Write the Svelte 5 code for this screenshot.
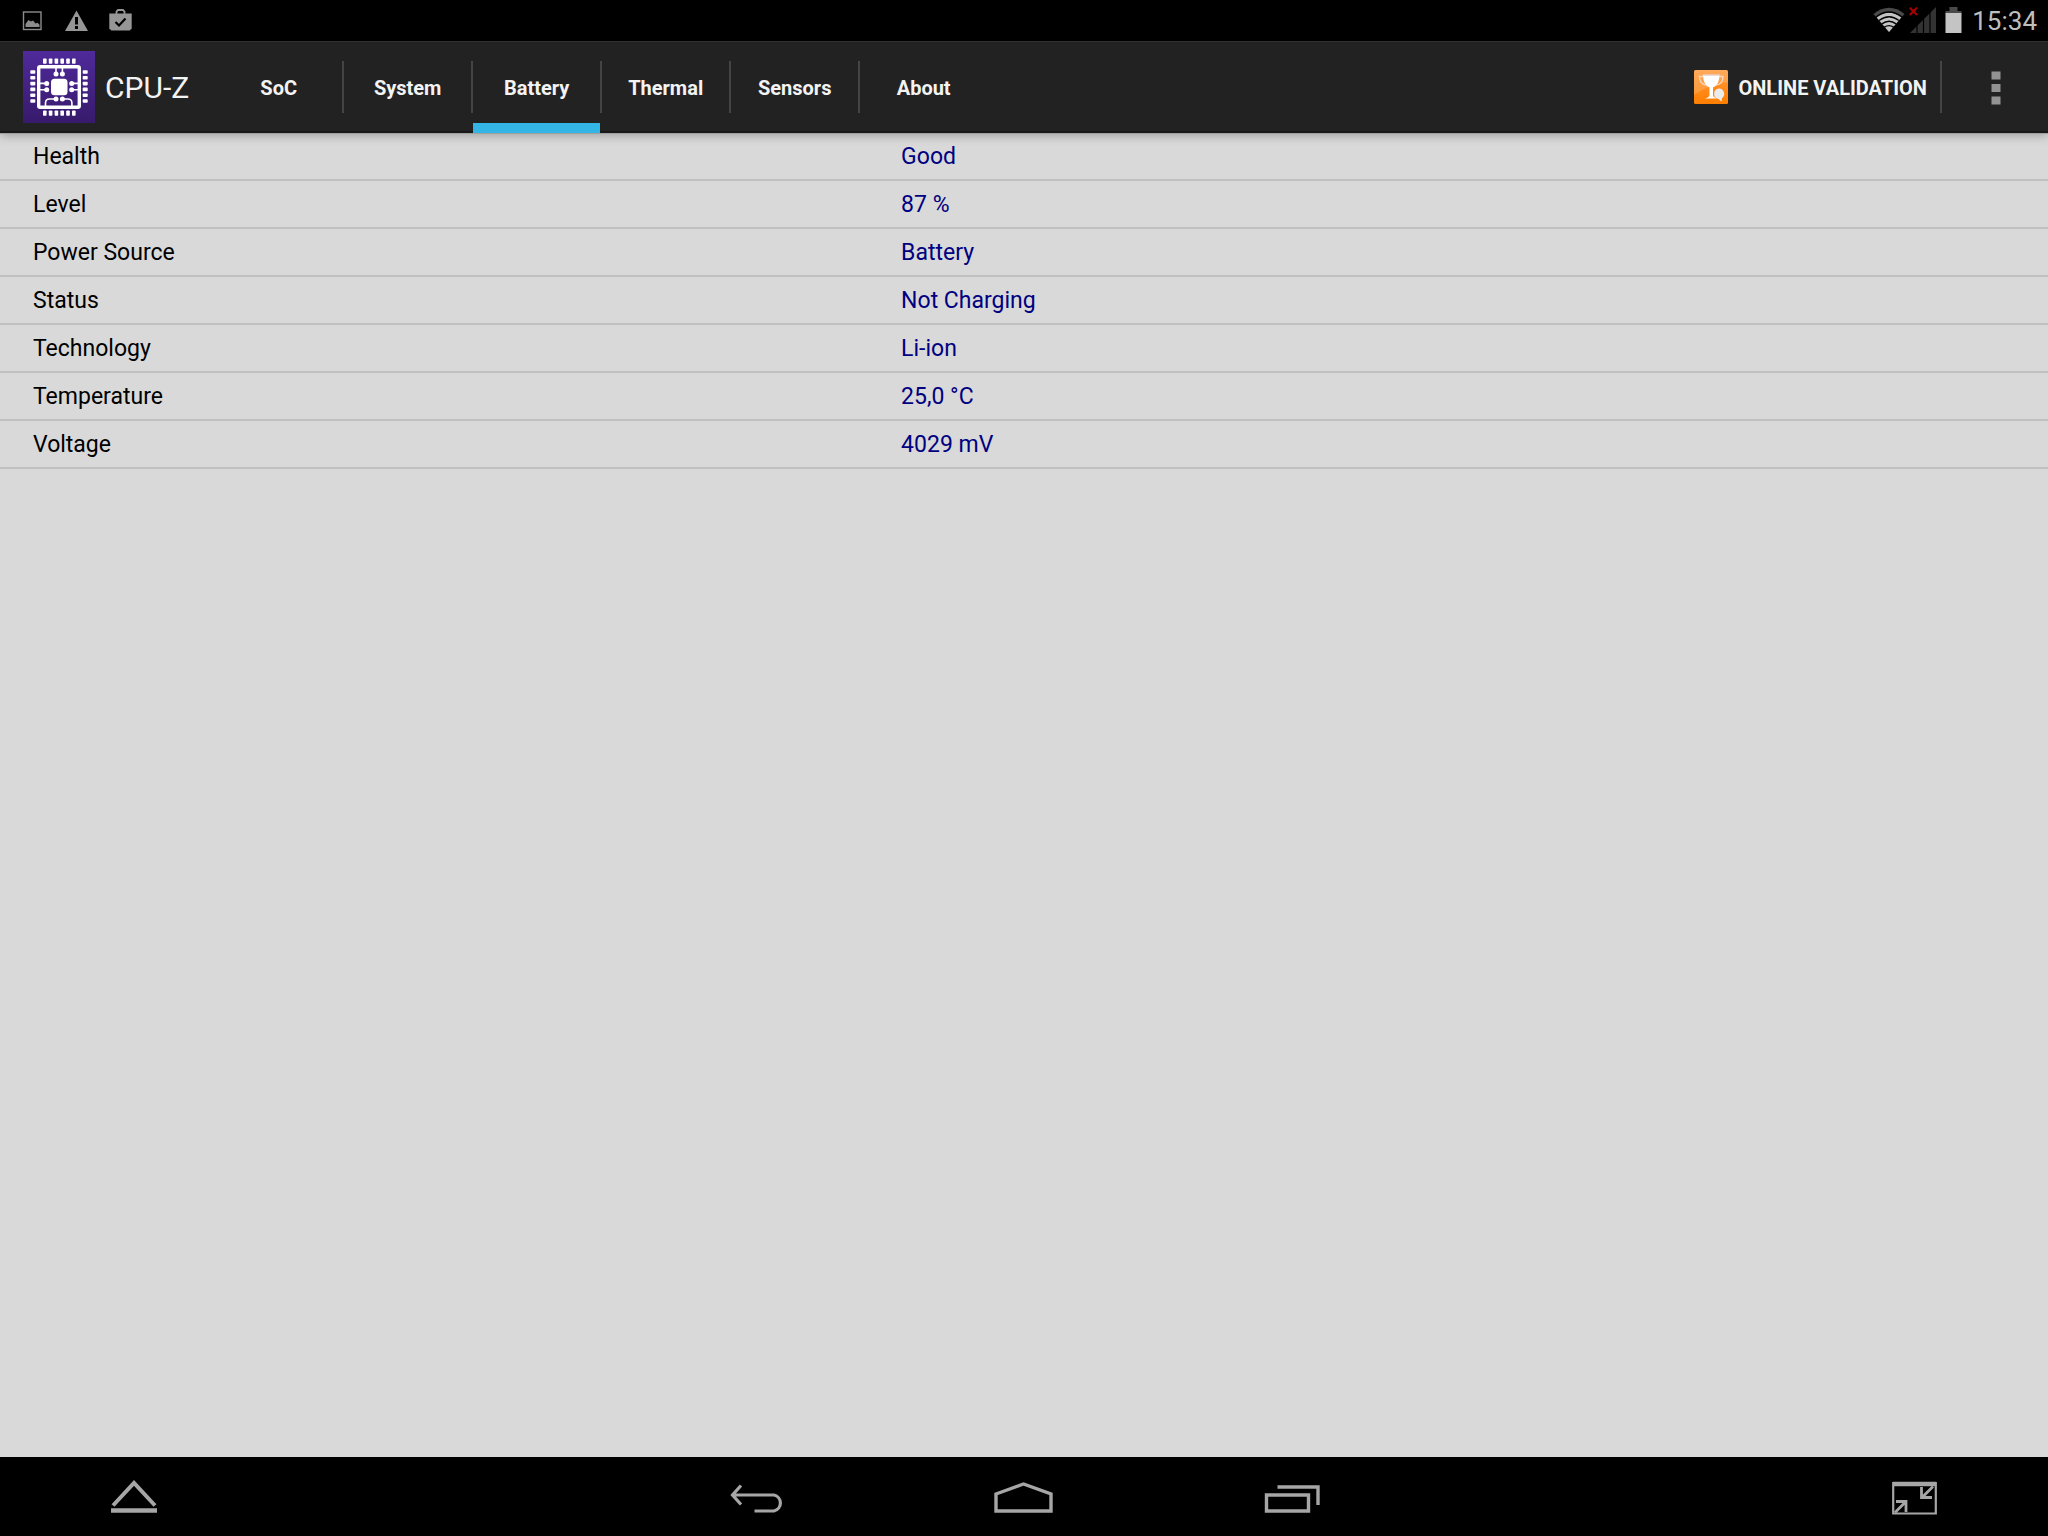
<script lang="ts">
    const TABS = ['SoC', 'System', 'Battery', 'Thermal', 'Sensors', 'About'];
    const PINS = [0, 1, 2, 3, 4, 5].map(i => 20 + i * 5.8);

    const BATTERY = [
        { label: 'Health',       value: 'Good' },
        { label: 'Level',        value: '87 %' },
        { label: 'Power Source', value: 'Battery' },
        { label: 'Status',       value: 'Not Charging' },
        { label: 'Technology',   value: 'Li-ion' },
        { label: 'Temperature',  value: '25,0 °C' },
        { label: 'Voltage',      value: '4029 mV' }
    ];

    let activeTab = $state('Battery');
    let rows = $derived(activeTab === 'Battery' ? BATTERY : []);
</script>

<div class="screen">

    <div class="status-bar">
        <div class="notifications">
            <svg width="24" height="24" viewBox="0 0 24 24" aria-hidden="true">
                <rect x="3.500" y="3" width="17.500" height="17.500" fill="none" stroke="#8c8c8c" stroke-width="1.400" />
                <path d="M5.500 18v-3l3-4 2.500 1.500 2-1 2.500 3 2-.8 2 2V18z" fill="#8c8c8c" />
            </svg>
            <svg width="24" height="24" viewBox="0 0 24 24" aria-hidden="true">
                <path d="M12.500 1.500 24 22H1z" fill="#969696" />
                <path d="M11 8h3v7.500h-3zM11 17h3v3h-3z" fill="#000" />
            </svg>
            <svg width="24" height="24" viewBox="0 0 24 24" aria-hidden="true">
                <path d="M8.500 5V2.500L10 1h5l1.500 1.500V5" fill="none" stroke="#969696" stroke-width="1.800" />
                <path d="M1.300 4.500h22.400v15l-2 2H3.300l-2-2z" fill="#969696" />
                <path d="m7.500 13 3.500 3.500 6.500-7" fill="none" stroke="#000" stroke-width="2.200" />
            </svg>
        </div>
        <div class="indicators">
            <svg width="32" height="28" viewBox="0 0 32 28" aria-hidden="true">
                <path d="M.5 7Q16-5.500 31.500 7L16 25z" fill="#4a4a4a" />
                <path d="M3.800 10.500Q16 1 28.200 10.500L16 25z" fill="#c4c4c4" />
                <g fill="none" stroke="#000" stroke-width="1.400">
                    <path d="M2.800 10Q16 0 29.200 10" />
                    <path d="M6 13.500q10-7.600 20 0" />
                    <path d="M8.800 16.900q7.200-5.400 14.400 0" />
                    <path d="M11.400 20.100q4.600-3 9.200 0" />
                </g>
            </svg>
            <svg class="signal" width="28" height="28" viewBox="0 0 28 28" aria-hidden="true">
                <path d="M1 26 27 0v26z" fill="#333" />
                <path d="M8 0v28M14.500 0v28M21 0v28" stroke="#000" stroke-width="1.200" />
                <path d="m.8.800 7.200 7.200m0-7.200L.8 8" stroke="#a80000" stroke-width="2" />
            </svg>
            <svg class="battery" width="18" height="28" viewBox="0 0 18 28" aria-hidden="true">
                <path d="M5.500 0h8v4h4v3h-16V4h4z" fill="#4a4a4a" />
                <path d="M1.500 6h16v20h-16z" fill="#c4c4c4" />
            </svg>
            <time class="clock">15:34</time>
        </div>
    </div>

    <header class="action-bar">
        <svg class="logo" width="72" height="72" viewBox="0 0 72 72" aria-hidden="true">
            <defs>
                <linearGradient id="logo-bg" x1="0" y1="0" x2="0" y2="1">
                    <stop offset="0" stop-color="#4f2a9b" />
                    <stop offset="1" stop-color="#371a6b" />
                </linearGradient>
            </defs>
            <rect width="72" height="72" fill="url(#logo-bg)" />
            <g fill="#fff">
                {#each PINS as p}
                    <rect x={p} y="7.500" width="3.600" height="5.200" rx=".8" />
                    <rect x={p} y="59.500" width="3.600" height="5.200" rx=".8" />
                    <rect x="7.300" y={p - 0.8} width="5" height="3.600" rx=".8" />
                    <rect x="59.700" y={p - 0.8} width="5" height="3.600" rx=".8" />
                {/each}
                <rect x="28" y="27.800" width="16.500" height="16.500" rx="3.500" />
                <circle cx="33" cy="23" r="2.500" />
                <circle cx="39.400" cy="23" r="2.500" />
                <circle cx="23.700" cy="32.400" r="2.500" />
                <circle cx="23.700" cy="38.800" r="2.500" />
                <circle cx="48.700" cy="32.400" r="2.500" />
                <circle cx="48.700" cy="38.800" r="2.500" />
                <circle cx="33" cy="48" r="2.500" />
                <circle cx="39.400" cy="48" r="2.500" />
            </g>
            <g fill="none" stroke="#fff">
                <rect x="15.700" y="15.700" width="40.600" height="40.600" rx="1.500" stroke-width="3.400" />
                <path d="M33 23v-7M39.400 23v-7M23.700 32.400H16M23.700 38.800H16M48.700 32.400H56M48.700 38.800H56M33 48h-6.500q-4 0-4 4v4M39.400 48h5.500q4 0 4 4v4" stroke-width="1.600" />
            </g>
        </svg>
        <h1 class="title">CPU-Z</h1>

        <div class="tabs" role="tablist">
            {#each TABS as tab}
                <button
                    class="tab"
                    class:active={activeTab === tab}
                    role="tab"
                    aria-selected={activeTab === tab}
                    onclick={() => activeTab = tab}
                >{tab}</button>
            {/each}
        </div>

        <button class="validate">
            <svg width="34" height="34" viewBox="0 0 34 34" aria-hidden="true">
                <defs>
                    <linearGradient id="cup-bg" x1="0" y1="0" x2="0" y2="1">
                        <stop offset="0" stop-color="#ff9a3c" />
                        <stop offset="1" stop-color="#ff7e00" />
                    </linearGradient>
                </defs>
                <rect width="34" height="34" rx="1.500" fill="url(#cup-bg)" />
                <path d="M0 1.500Q0 0 1.500 0h31Q34 0 34 1.500V12Q14 15 0 25z" fill="#fff" opacity=".16" />
                <path d="M9.500 6.500h-4q0 8 7 8.500M25 6.500h4q0 8-7 8.500" fill="none" stroke="#f6d9c0" stroke-width="1.300" />
                <path d="M9 4.500h16.500q0 10-6.500 13v7.500q0 2 4 3.500H11q4.500-1.500 4.500-3.500v-7.500Q9 14.500 9 4.500z" fill="#fff" />
                <path d="M9.500 5h15.500" stroke="#d8b9a4" />
                <path d="M25 18.500a5.400 5.400 0 0 1 3 9.700l-.5 3.300-3-2.500a5.300 5.300 0 0 1 .5-10.500z" fill="#ececec" />
            </svg>
            <span>ONLINE VALIDATION</span>
        </button>
        <button class="overflow" aria-label="More options">
            <svg width="10" height="34" viewBox="0 0 10 34" aria-hidden="true">
                <path d="M.5.500h9v8h-9zM.5 13h9v8h-9zM.5 25.500h9v8h-9z" fill="#939393" />
            </svg>
        </button>
    </header>

    <main class="content">
        <table>
            <tbody>
                {#each rows as row}
                    <tr>
                        <th scope="row">{row.label}</th>
                        <td>{row.value}</td>
                    </tr>
                {/each}
            </tbody>
        </table>
    </main>

    <nav class="nav-bar">
        <button aria-label="Show panel">
            <svg width="64" height="39" viewBox="0 0 64 39" aria-hidden="true">
                <path d="M11 28.500 32 6l21 22.500" stroke-width="4" />
                <path d="M9 33.500h46" stroke-width="4.500" />
            </svg>
        </button>
        <div class="nav-keys">
            <button aria-label="Back">
                <svg width="64" height="39" viewBox="0 0 64 39" aria-hidden="true">
                    <path d="M17 8.500 8.500 18l8.500 9.500M8.500 18h41.500a8.200 8.200 0 0 1 0 16H30.500" stroke-width="3.200" />
                </svg>
            </button>
            <button aria-label="Home">
                <svg width="64" height="39" viewBox="0 0 64 39" aria-hidden="true">
                    <path d="M4 17 31.500 7 59 17v17H4z" stroke-width="3.400" />
                </svg>
            </button>
            <button aria-label="Recent apps">
                <svg width="64" height="39" viewBox="0 0 64 39" aria-hidden="true">
                    <path d="M6.500 18h42v16h-42zM17.500 10h40.500v18" stroke-width="3.400" />
                </svg>
            </button>
        </div>
        <button aria-label="Shrink window">
            <svg width="64" height="39" viewBox="0 0 64 39" aria-hidden="true">
                <path d="M11.200 6h42.600v30.500H11.200z" stroke-width="2.200" />
                <path d="M11 7h43" stroke-width="4.500" />
                <path d="M13 35.500 24 24.500M14 24.500h10v10.500M51 9.500 40 20.500M50 20.500H39.500V10" stroke-width="2.800" />
            </svg>
        </button>
    </nav>

</div>

<style>
:global(body) {
    background: #d9d9d9;
}

.screen {
    min-height: 100vh;
    display: flex;
    flex-direction: column;
    font-family: Roboto, sans-serif;
}

button {
    background: none;
    border: none;
    padding: 0;
    font-family: inherit;
    cursor: pointer;
}

svg {
    display: block;
    flex: none;
}

/* ── Status bar ── */
.status-bar {
    height: 41px;
    display: flex;
    align-items: center;
    justify-content: space-between;
    padding: 0 11px 0 20px;
    background: #000;
}

.notifications {
    display: flex;
    gap: 20px;
}

.indicators {
    display: flex;
    align-items: center;
}

.signal {
    margin-left: 4px;
}

.battery {
    margin: 0 10px 0 7px;
}

.clock {
    font-size: 26px;
    line-height: 40px;
    color: #bebebe;
}

/* ── Action bar ── */
.action-bar {
    position: relative;
    z-index: 1;
    height: 92px;
    box-sizing: border-box;
    display: flex;
    align-items: center;
    padding-left: 23px;
    border-top: 1px solid #303030;
    border-bottom: 2px solid #191919;
    background: #222;
    box-shadow: 0 1px 0 #a0a0a0, 0 2px 10px rgba(0, 0, 0, 0.3);
}

.title {
    margin: 0 26px 0 10px;
    padding-top: 2px;
    font-size: 30px;
    font-weight: 400;
    color: #f3f3f3;
}

.tabs {
    align-self: stretch;
    display: flex;
    gap: 2px;
    margin-bottom: -2px;
}

.tab {
    position: relative;
    width: 127px;
    box-sizing: border-box;
    border-top: 10px solid transparent;
    border-bottom: 10px solid transparent;
    font-size: 20px;
    font-weight: 700;
    color: #f3f3f3;
}

.tab.active {
    border-bottom-color: #33b5e5;
}

.tab + .tab::before {
    content: '';
    position: absolute;
    top: 9px;
    left: -2px;
    width: 2px;
    height: 52px;
    background: #444;
}

.validate {
    height: 52px;
    display: flex;
    align-items: center;
    gap: 10px;
    margin-left: auto;
    padding-right: 13px;
    border-right: 2px solid #444;
    font-size: 20px;
    font-weight: 700;
    color: #f3f3f3;
}

.validate span {
    padding-top: 2px;
}

.overflow {
    width: 106px;
    display: flex;
    justify-content: center;
    padding: 2px 0 0 2px;
}

/* ── Data list ── */
.content {
    flex: 1;
    background: #d9d9d9;
}

table {
    width: 100%;
    table-layout: fixed;
    border-collapse: separate;
    border-spacing: 0;
}

th,
td {
    padding: 2px 0 0;
    border-bottom: 2px solid #c0c0c0;
    font-size: 23px;
    line-height: 44px;
    font-weight: 400;
    text-align: left;
}

th {
    width: 44%;
    box-sizing: border-box;
    padding-left: 33px;
    color: #000;
}

td {
    color: #000080;
}

/* ── Navigation bar ── */
.nav-bar {
    height: 79px;
    display: flex;
    justify-content: space-between;
    background: #000;
}

.nav-keys {
    display: flex;
}

.nav-bar button {
    width: 268px;
    display: flex;
    align-items: center;
    justify-content: center;
}

.nav-bar svg {
    fill: none;
    stroke: #a6a6a6;
}
</style>
